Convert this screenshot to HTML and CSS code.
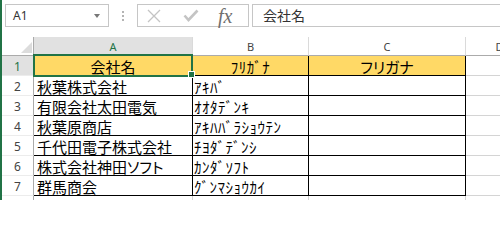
FILE: index.html
```html
<!DOCTYPE html>
<html lang="ja">
<head>
<meta charset="utf-8">
<link rel="stylesheet" href="styles.css">
</head>
<body>
<div class="window">
  <div class="toolbar">
    <div class="namebox"><span class="ref">A1</span><span class="caret"></span></div>
    <div class="grip"><i></i><i></i><i></i></div>
    <div class="fxbox">
      <svg class="ico-x" width="14" height="14" viewBox="0 0 14 14"><path d="M1 1L13 13M13 1L1 13" stroke="#c4c4c4" stroke-width="1.3" fill="none"/></svg>
      <svg class="ico-check" width="16" height="13" viewBox="0 0 16 13"><path d="M1.5 6.5L5.5 11L14.5 1.5" stroke="#c4c4c4" stroke-width="2.6" fill="none"/></svg>
      <span class="fx">fx</span>
    </div>
    <div class="formula">会社名</div>
  </div>
  <div class="sheet">
    <div class="corner"><svg width="11" height="11" viewBox="0 0 11 11"><path d="M11 0V11H0Z" fill="#dcdcdc"/></svg></div>
    <div class="hd on">A</div>
    <div class="hd">B</div>
    <div class="hd">C</div>
    <div class="hd">D</div>

    <div class="rh on">1</div>
    <div class="c h a1">会社名<span class="sel"></span><span class="handle"></span></div>
    <div class="c h k">ﾌﾘｶﾞﾅ</div>
    <div class="c h">フリガナ</div>
    <div class="c e"></div>

    <div class="rh">2</div>
    <div class="c">秋葉株式会社</div>
    <div class="c k">ｱｷﾊﾞ</div>
    <div class="c"></div>
    <div class="c e"></div>

    <div class="rh">3</div>
    <div class="c">有限会社太田電気</div>
    <div class="c k">ｵｵﾀﾃﾞﾝｷ</div>
    <div class="c"></div>
    <div class="c e"></div>

    <div class="rh">4</div>
    <div class="c">秋葉原商店</div>
    <div class="c k">ｱｷﾊﾊﾞﾗｼｮｳﾃﾝ</div>
    <div class="c"></div>
    <div class="c e"></div>

    <div class="rh">5</div>
    <div class="c">千代田電子株式会社</div>
    <div class="c k">ﾁﾖﾀﾞﾃﾞﾝｼ</div>
    <div class="c"></div>
    <div class="c e"></div>

    <div class="rh">6</div>
    <div class="c">株式会社神田ソフト</div>
    <div class="c k">ｶﾝﾀﾞｿﾌﾄ</div>
    <div class="c"></div>
    <div class="c e"></div>

    <div class="rh">7</div>
    <div class="c">群馬商会</div>
    <div class="c k">ｸﾞﾝﾏｼｮｳｶｲ</div>
    <div class="c"></div>
    <div class="c e"></div>

    <div class="rh"></div>
    <div class="c e"></div>
    <div class="c e"></div>
    <div class="c e"></div>
    <div class="c e"></div>
  </div>
</div>
</body>
</html>
```
FILE: styles.css
```css
html, body {
  margin: 0;
  padding: 0;
}
body {
  width: 500px;
  height: 200px;
  overflow: hidden;
  background: #fff;
  font-family: "Noto Sans CJK JP", sans-serif;
}
.window {
  border-left: 2px solid #217346;
  height: 200px;
  box-sizing: border-box;
  overflow: hidden;
}
.toolbar {
  display: flex;
  align-items: flex-start;
  height: 37px;
  padding-top: 4px;
  box-sizing: border-box;
}
.namebox {
  margin-left: 3px;
  width: 104px;
  height: 23px;
  box-sizing: border-box;
  border: 1px solid #c6c6c6;
  display: flex;
  align-items: center;
  justify-content: space-between;
  padding: 0 8px 0 7px;
}
.ref {
  font-family: "Noto Sans", sans-serif;
  font-size: 12px;
  color: #333;
}
.caret {
  width: 0;
  height: 0;
  border-left: 3px solid transparent;
  border-right: 3px solid transparent;
  border-top: 4px solid #777;
}
.grip {
  margin-left: 13px;
  display: flex;
  flex-direction: column;
  gap: 2px;
  padding-top: 7px;
}
.grip i {
  display: block;
  width: 2px;
  height: 2px;
  background: #b4b4b4;
}
.fxbox {
  margin-left: 13px;
  width: 112px;
  height: 23px;
  border: 1px solid #c6c6c6;
  box-sizing: border-box;
  display: flex;
  align-items: center;
}
.ico-x {
  margin-left: 9px;
  flex: none;
}
.ico-check {
  margin-left: 22px;
  flex: none;
}
.fx {
  margin-left: 19px;
  font-family: "Liberation Serif", serif;
  font-style: italic;
  font-size: 20px;
  line-height: 20px;
  color: #707070;
}
.formula {
  margin-left: 3px;
  margin-right: -6px;
  flex: 1;
  height: 23px;
  border: 1px solid #c6c6c6;
  box-sizing: border-box;
  padding-left: 10px;
  font-size: 14px;
  line-height: 20px;
  color: #333;
}
.sheet {
  display: grid;
  grid-template-columns: 32px 159px 116px 157px 68px;
  grid-template-rows: 19px repeat(8, 20px);
}
.sheet > div {
  box-sizing: border-box;
}
.corner {
  border-right: 1px solid #ababab;
  border-bottom: 1px solid #ababab;
  display: flex;
  justify-content: flex-end;
  align-items: flex-end;
  padding: 0 1px 2px 0;
}
.hd {
  border-right: 1px solid #dadada;
  border-bottom: 1px solid #ababab;
  font-family: "Noto Sans", sans-serif;
  font-size: 11px;
  color: #444;
  display: flex;
  align-items: center;
  justify-content: center;
}
.hd.on {
  background: #e1e1e1;
  color: #217346;
}
.rh {
  border-right: 1px solid #ababab;
  border-bottom: 1px solid #ececec;
  font-family: "Noto Sans", sans-serif;
  font-size: 12px;
  color: #444;
  display: flex;
  align-items: center;
  justify-content: center;
  padding-top: 2px;
}
.rh.on {
  background: #e1e1e1;
  color: #217346;
}
.c {
  border-right: 1px solid #000;
  border-bottom: 1px solid #000;
  font-size: 15px;
  line-height: 15px;
  padding: 3px 0 0 3px;
  white-space: nowrap;
  overflow: hidden;
  color: #000;
  font-feature-settings: "palt";
}
.c.k {
  padding-left: 1px;
  letter-spacing: 0.5px;
}
.c.h {
  background: #ffd966;
  text-align: center;
  padding-left: 0;
}
.c.e {
  border-right: 1px solid #d4d4d4;
  border-bottom: 1px solid #d4d4d4;
}
.c.a1 {
  position: relative;
  overflow: visible;
}
.sel {
  position: absolute;
  left: -1px;
  top: -2px;
  width: 160px;
  height: 23px;
  border: 2px solid #217346;
  box-sizing: border-box;
}
.handle {
  position: absolute;
  left: 155px;
  top: 16px;
  width: 5px;
  height: 5px;
  background: #217346;
  outline: 1px solid #fff;
}
```
